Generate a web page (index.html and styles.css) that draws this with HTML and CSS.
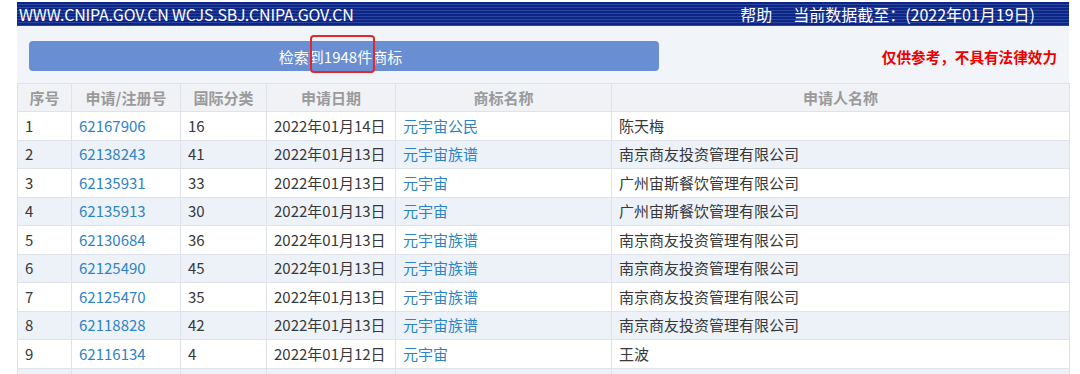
FILE: index.html
```html
<!DOCTYPE html>
<html lang="zh-CN">
<head>
<meta charset="utf-8">
<title>商标检索结果</title>
<link rel="stylesheet" href="styles.css">
</head>
<body>
<div class="page">
  <div class="topbar">
    <span class="site">WWW.CNIPA.GOV.CN WCJS.SBJ.CNIPA.GOV.CN</span>
    <span class="topright"><span class="help">帮助</span><span>当前数据截至：(2022年01月19日)</span></span>
  </div>
  <div class="toolbar">
    <div class="result">
      <span>检索到1948件商标</span>
      <span class="mark"></span>
    </div>
    <div class="notice">仅供参考，不具有法律效力</div>
  </div>
  <table class="grid">
    <colgroup>
      <col class="c1"><col class="c2"><col class="c3"><col class="c4"><col class="c5"><col class="c6">
    </colgroup>
    <thead>
      <tr><th>序号</th><th>申请/注册号</th><th>国际分类</th><th>申请日期</th><th>商标名称</th><th>申请人名称</th></tr>
    </thead>
    <tbody>
      <tr><td>1</td><td><a>62167906</a></td><td>16</td><td>2022年01月14日</td><td><a>元宇宙公民</a></td><td>陈天梅</td></tr>
      <tr><td>2</td><td><a>62138243</a></td><td>41</td><td>2022年01月13日</td><td><a>元宇宙族谱</a></td><td>南京商友投资管理有限公司</td></tr>
      <tr><td>3</td><td><a>62135931</a></td><td>33</td><td>2022年01月13日</td><td><a>元宇宙</a></td><td>广州宙斯餐饮管理有限公司</td></tr>
      <tr><td>4</td><td><a>62135913</a></td><td>30</td><td>2022年01月13日</td><td><a>元宇宙</a></td><td>广州宙斯餐饮管理有限公司</td></tr>
      <tr><td>5</td><td><a>62130684</a></td><td>36</td><td>2022年01月13日</td><td><a>元宇宙族谱</a></td><td>南京商友投资管理有限公司</td></tr>
      <tr><td>6</td><td><a>62125490</a></td><td>45</td><td>2022年01月13日</td><td><a>元宇宙族谱</a></td><td>南京商友投资管理有限公司</td></tr>
      <tr><td>7</td><td><a>62125470</a></td><td>35</td><td>2022年01月13日</td><td><a>元宇宙族谱</a></td><td>南京商友投资管理有限公司</td></tr>
      <tr><td>8</td><td><a>62118828</a></td><td>42</td><td>2022年01月13日</td><td><a>元宇宙族谱</a></td><td>南京商友投资管理有限公司</td></tr>
      <tr><td>9</td><td><a>62116134</a></td><td>4</td><td>2022年01月12日</td><td><a>元宇宙</a></td><td>王波</td></tr>
      <tr><td></td><td></td><td></td><td></td><td></td><td></td></tr>
    </tbody>
  </table>
</div>
</body>
</html>
```

FILE: styles.css
```css
html, body {
  margin: 0;
  padding: 0;
  background: #ffffff;
  overflow: hidden;
}

body {
  font-family: "Noto Sans CJK SC", "Noto Sans", sans-serif;
  color: #333333;
}

.page {
  width: 1052px;
  margin: 2px 0 0 17px;
}

.topbar {
  height: 24px;
  display: flex;
  align-items: center;
  justify-content: space-between;
  padding: 0 34px 0 2px;
  color: #ffffff;
  font-size: 16px;
  line-height: 24px;
  background: repeating-linear-gradient(to bottom, #0d2684 0px, #0d2684 2px, #2a46a2 2px, #2a46a2 3px);
}

.site {
  letter-spacing: -0.2px;
}

.topright {
  display: flex;
  gap: 21px;
}

.toolbar {
  height: 57px;
  box-sizing: border-box;
  background: #f1f4f9;
  display: flex;
  align-items: center;
  justify-content: space-between;
  padding: 3px 12px 0 12px;
}

.result {
  position: relative;
  width: 630px;
  height: 30px;
  box-sizing: border-box;
  padding-right: 7px;
  border-radius: 4px;
  background: #6a8ed2;
  color: #ffffff;
  font-size: 15px;
  display: flex;
  align-items: center;
  justify-content: center;
}

.mark {
  position: absolute;
  left: 281px;
  top: -6px;
  width: 61px;
  height: 34px;
  border: 2.5px solid #e3282c;
  border-radius: 4px;
}

.notice {
  color: #ee0000;
  font-weight: bold;
  font-size: 14.6px;
  padding-top: 1px;
}

.grid {
  width: 1052px;
  table-layout: fixed;
  border-collapse: collapse;
  font-size: 15px;
  line-height: 20px;
}

.c1 { width: 54px; }
.c2 { width: 109px; }
.c3 { width: 86px; }
.c4 { width: 129px; }
.c5 { width: 216px; }
.c6 { width: 458px; }

.grid th,
.grid td {
  border: 1px solid #dfe2e8;
  padding: 0 7px;
  white-space: nowrap;
  overflow: hidden;
}

.grid th {
  height: 27px;
  background: #f0f2f6;
  color: #9a9a9a;
  font-weight: bold;
  text-align: center;
}

.grid td {
  height: 27.5px;
  text-align: left;
  color: #383838;
}

.grid tbody tr:nth-child(even) td {
  background: #edf2f9;
}

.grid a {
  color: #2e83c4;
  text-decoration: none;
}
```
